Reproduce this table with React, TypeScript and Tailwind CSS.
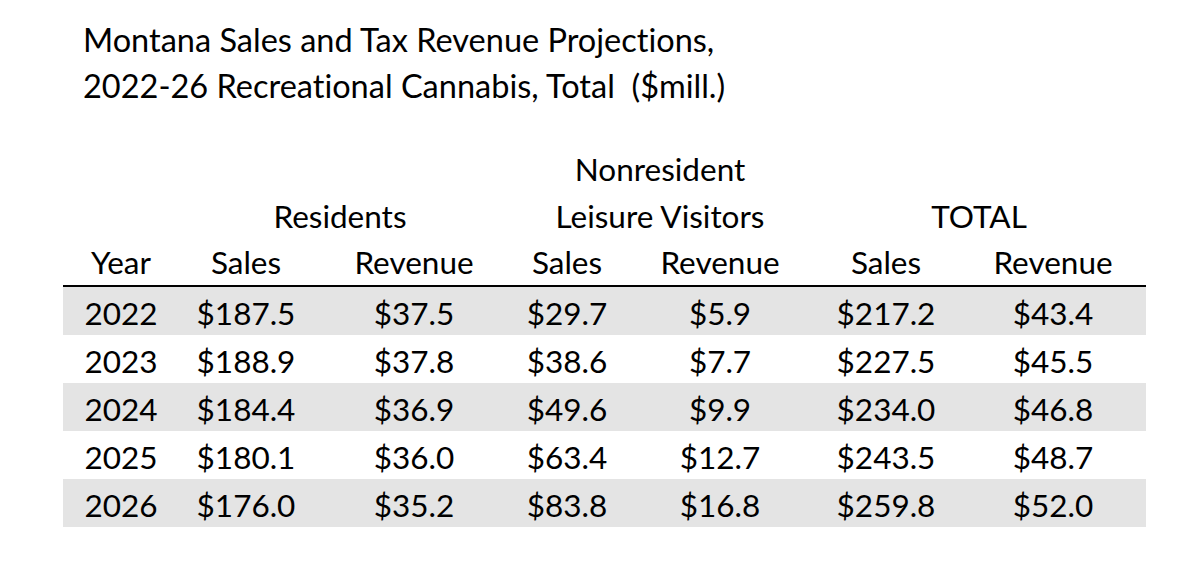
import React from "react";

const rows: [string, string, string, string, string, string, string][] = [
  ["2022", "$187.5", "$37.5", "$29.7", "$5.9", "$217.2", "$43.4"],
  ["2023", "$188.9", "$37.8", "$38.6", "$7.7", "$227.5", "$45.5"],
  ["2024", "$184.4", "$36.9", "$49.6", "$9.9", "$234.0", "$46.8"],
  ["2025", "$180.1", "$36.0", "$63.4", "$12.7", "$243.5", "$48.7"],
  ["2026", "$176.0", "$35.2", "$83.8", "$16.8", "$259.8", "$52.0"],
];

const grid =
  "grid grid-cols-[116px_134px_202px_104px_202px_130px_195px] w-[1083px]";

export default function App() {
  return (
    <div
      className="w-[1200px] h-[561px] bg-white text-black overflow-hidden [font-variant-ligatures:none]"
      style={{ fontFamily: "Lato, 'Open Sans', sans-serif" }}
    >
      <div className="pl-[83px] pt-[17px] text-[32.5px] leading-[46px]">
        <div>Montana Sales and Tax Revenue Projections,</div>
        <div className="whitespace-pre">2022-26 Recreational Cannabis, Total  ($mill.)</div>
      </div>

      <div className="ml-[63px] mt-[37px] text-[31.5px]">
        <div className={`${grid} h-[47px] leading-[47px]`}>
          <div className="col-start-4 col-span-2 text-center pr-[16px]">Nonresident</div>
        </div>
        <div className={`${grid} h-[47px] leading-[47px]`}>
          <div className="col-start-2 col-span-2 text-center pr-[14px]">Residents</div>
          <div className="col-start-4 col-span-2 text-center pr-[16px]">Leisure Visitors</div>
          <div className="col-start-6 col-span-2 text-center pr-[9px]">TOTAL</div>
        </div>
        <div className={`${grid} h-[45px] leading-[45px]`}>
          <div className="text-center">Year</div>
          <div className="text-center">Sales</div>
          <div className="text-center">Revenue</div>
          <div className="text-center">Sales</div>
          <div className="text-center">Revenue</div>
          <div className="text-center">Sales</div>
          <div className="text-center pl-[9px]">Revenue</div>
        </div>
        <div className="w-[1083px] h-[2px] bg-black" />
        {rows.map((r, i) => (
          <div
            key={r[0]}
            className={`${grid} h-[48px] leading-[52px] ${i % 2 === 0 ? "bg-[#e4e4e4]" : "bg-white"}`}
          >
            {r.map((c, j) => (
              <div key={j} className={j === 6 ? "text-center pl-[9px]" : "text-center"}>
                {c}
              </div>
            ))}
          </div>
        ))}
      </div>
    </div>
  );
}
